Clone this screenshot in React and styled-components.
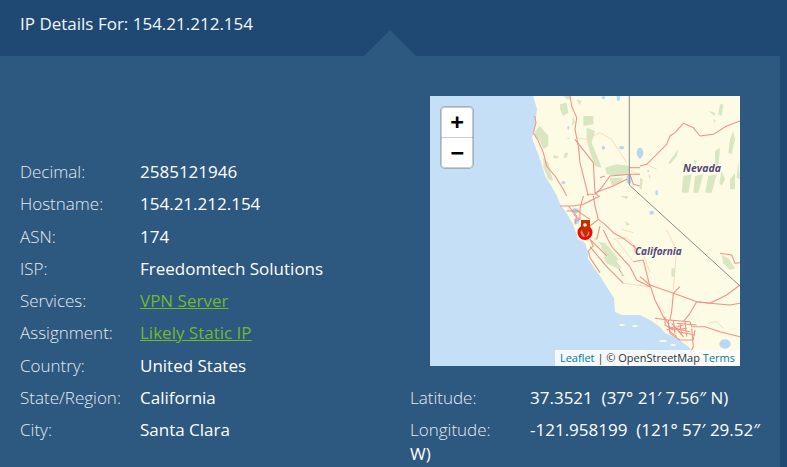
import React from "react";
import styled, { createGlobalStyle } from "styled-components";

const Global = createGlobalStyle`
  html, body { margin: 0; padding: 0; background: #1f4973; overflow: hidden; height: 467px; }
  * { box-sizing: border-box; }
`;

const Page = styled.div`
  width: 787px;
  height: 467px;
  overflow: hidden;
  font-family: "Open Sans", "Liberation Sans", sans-serif;
  font-size: 17px;
  color: #fff;
  background: #1f4973;
`;

const Header = styled.header`
  position: relative;
  height: 56px;
  padding: 12px 20px 0;
  line-height: 24px;
  color: #f2f6fa;
`;

const Notch = styled.span`
  position: absolute;
  left: 364px;
  bottom: 0;
  width: 0;
  height: 0;
  border-left: 26px solid transparent;
  border-right: 26px solid transparent;
  border-bottom: 26px solid #2d587f;
`;

const Panel = styled.section`
  width: 780px;
  height: 411px;
  background: #2d587f;
  display: flex;
  padding-top: 40px;
`;

const LeftColumn = styled.div`
  width: 410px;
  padding: 64px 0 0 20px;
`;

const RightColumn = styled.div`
  width: 356px;
`;

const Row = styled.div`
  line-height: 24px;
  margin-bottom: 8.25px;
`;

const Label = styled.span`
  display: inline-block;
  width: 120px;
  font-weight: 300;
  color: #e3ebf2;
`;

const Value = styled.span`
  color: #fff;
`;

const ValueLink = styled.a`
  color: #74b72f;
  text-decoration: underline;
`;

const MapBox = styled.div`
  position: relative;
  width: 310px;
  height: 270px;
  margin: 0 0 20px 20px;
  background: #c4dff6;
  overflow: hidden;
`;

const MapArt = styled.svg`
  display: block;
  width: 310px;
  height: 270px;
`;

const SoftLayer = styled.g`
  filter: blur(0.45px);
`;

const MapLabel = styled.text`
  font-family: "Open Sans", "Liberation Sans", sans-serif;
  font-size: ${(p) => p.$size}px;
  font-weight: 700;
  font-style: italic;
  fill: #54466f;
  stroke: rgba(255, 255, 255, 0.6);
  stroke-width: 1.5px;
  paint-order: stroke;
`;

const ZoomControl = styled.div`
  position: absolute;
  left: 11px;
  top: 11px;
  width: 32px;
  border-radius: 4px;
  outline: 2px solid rgba(0, 0, 0, 0.2);
  outline-offset: -1px;
  background: #fff;
  overflow: hidden;
  display: flex;
  flex-direction: column;
`;

const ZoomButton = styled.button`
  width: 32px;
  height: 30px;
  border: 0;
  padding: 0;
  background: #fff;
  color: #000;
  font: 700 22px/28px "DejaVu Sans Mono", monospace;
  & + & { border-top: 1px solid #ccc; height: 31px; }
`;

const Attribution = styled.div`
  position: absolute;
  right: 0;
  bottom: 0;
  height: 16px;
  padding: 0 5px;
  background: rgba(255, 255, 255, 0.8);
  color: #333;
  font-size: 11px;
  line-height: 16px;
  white-space: nowrap;
`;

const AttributionLink = styled.a`
  color: #0078a8;
`;

const land =
  "M533 96 L537 109 L535 126 L532 138 L535 146 L540 159 L545 176 L550 184 L557 196 L560 204 L567 214 L573 224 L578 239 L585 243 L588 253 L588 259 L600 276 L610 292 L614 298 L615 312 L622 315 L640 315 L650 320 L660 327 L665 333 L677 338 L690 348 L697 366 L740 366 L740 96 Z";

/* Each tile holds strokes in units of a third of a pixel, placed at its own corner. */
const tiles = [
  {
    x: 530,
    y: 96,
    parks: [
      "15,105 30,90 55,120 55,150 40,160 30,135 15,120",
      "40,185 55,200 65,240 70,255 55,250 40,215",
      "90,25 110,20 115,50 100,60 90,40",
      "160,60 190,60 190,85 160,90",
      "170,95 195,105 185,140 205,190 215,215 195,210 180,170 170,130",
      "225,215 260,205 300,210 295,235 265,240 230,235",
      "240,245 280,245 270,260 245,270",
      "70,178 85,180 85,187 70,187",
      "105,170 115,170 110,185 100,185",
      "130,60 135,80 125,90",
      "110,125 120,125 115,130",
      "100,0 125,0 115,12",
      "140,10 155,15 148,28",
    ],
    minor: [
      "140,125 170,130 210,110 245,130 290,200",
      "40,190 60,230",
      "300,225 330,235",
    ],
    roads: [
      "120,0 125,30 140,65 135,100 145,150 150,200 165,260 175,300",
      "10,110 25,135 40,170 50,210 75,240 100,280 110,300",
      "135,130 190,200 195,290 205,300",
      "330,235 300,235 240,240 215,275 195,295 170,295",
      "300,215 330,215",
      "195,290 250,270 290,250",
      "225,240 210,245",
      "300,235 310,265 330,270",
      "14,60 18,80 10,110",
    ],
    lakes: [
      [100, 260, 6, 5], [220, 155, 5, 6], [275, 155, 8, 5], [265, 5, 5, 10], [220, 5, 5, 4],
      [330, 170, 10, 15], [297, 250, 8, 14], [115, 95, 3, 6],
    ],
  },
  {
    x: 640,
    y: 96,
    parks: [
      "240,25 250,25 245,60 235,55",
      "205,45 225,50 225,60",
      "220,70 228,75 222,80",
      "270,130 280,105 285,130 275,175 265,170",
      "85,200 115,160 110,180 90,205",
      "225,165 240,155 235,210 225,205",
      "160,190 170,195 165,210",
      "130,240 155,235 145,290 125,290",
      "165,240 190,235 175,290 160,290",
      "205,240 230,235 215,290 195,290",
      "245,225 255,250 245,270 238,260",
      "270,250 285,230 285,280 270,280",
      "295,195 300,250 290,245",
      "0,245 8,250 5,280 0,280",
      "25,235 32,240 28,250",
    ],
    minor: ["20,205 50,220"],
    roads: [
      "0,210 20,205 50,175 80,145 90,120 105,110 130,82 160,95 180,120 220,115 260,90 300,75",
    ],
    lakes: [[0, 175, 5, 14], [50, 290, 4, 8], [25, 225, 3, 3]],
  },
  {
    x: 560,
    y: 196,
    parks: [
      "125,140 145,150 175,190 165,200 145,185 125,160",
      "100,125 115,125 105,135",
      "195,75 210,85 200,90",
      "180,0 205,0 200,10",
      "95,215 105,220 100,228",
      "150,180 170,185 160,195",
    ],
    minor: [
      "160,130 200,125 225,150",
      "250,175 270,230",
      "185,100 220,110",
    ],
    roads: [
      "0,30 40,30 70,25 100,10 120,0",
      "100,0 105,30 115,70 135,85 160,110 195,130 225,155 225,170",
      "115,70 90,90 85,105",
      "60,40 60,70 50,75",
      "45,40 90,70",
      "70,0 60,40",
      "90,130 125,165 150,190 175,215 190,240",
      "90,130 100,150 85,165 90,185 120,230",
      "40,55 60,70",
      "120,90 110,130",
      "25,30 50,60 45,85",
      "20,45 60,45",
    ],
    lakes: [[45, 45, 11, 8], [50, 75, 8, 9], [275, 50, 7, 6]],
  },
  {
    x: 430,
    y: 230,
    parks: [
      "520,80 545,75 575,115 560,115 530,100",
      "570,125 580,130 575,140",
      "725,115 735,115 733,140 725,140",
      "505,35 530,40 520,55",
    ],
    minor: [
      "710,0 740,60 730,180",
      "580,160 660,170",
      "610,95 560,30",
    ],
    roads: [
      "520,0 545,50 600,110 620,150 660,170",
      "610,45 620,60",
      "610,95 640,90 660,170",
      "480,50 530,110 570,150 580,160",
    ],
    lakes: [],
  },
  {
    x: 640,
    y: 270,
    parks: [
      "95,0 105,0 103,18 95,18",
      "245,-45 265,-35 285,-5 270,0 250,-20",
    ],
    minor: [
      "205,160 230,155 250,175",
      "50,100 75,130",
      "170,255 180,285",
    ],
    roads: [
      "0,20 30,45 45,90 70,140 85,160 90,185 110,200",
      "30,45 100,70 130,80 170,95 210,100 260,75 300,45",
      "100,70 95,125 90,150",
      "170,95 150,130 130,155",
      "170,95 210,100 270,105 300,100",
      "120,50 100,70",
      "45,145 85,150 150,155 155,170 195,170 240,185 300,200",
      "85,150 90,190 120,210 160,210 165,180",
      "120,160 125,195",
      "155,175 160,230 150,250",
      "110,160 170,165",
      "75,140 75,165 100,180 140,175",
      "100,150 105,190",
      "135,155 140,200",
      "85,170 150,185",
      "240,-50 275,-45 285,-20 300,-22",
      "150,250 175,260 170,288",
      "95,160 130,200 110,175",
      "80,180 130,165",
      "115,185 165,195",
    ],
    lakes: [[255, 222, 17, 14]],
  },
];

const islands = [
  [663, 341, 4, 1], [673, 345, 3, 1], [642, 352, 3, 1], [622, 325, 3, 1], [635, 326, 3, 1],
];

const Park = styled.polygon`
  fill: #d8e6c2;
`;

const Trace = styled.polyline`
  fill: none;
  stroke: ${(p) => (p.$minor ? "#f8d6ba" : "#f09289")};
  stroke-width: ${(p) => (p.$minor ? 2.6 : 3.2)};
  stroke-linejoin: round;
`;

const Water = styled.ellipse`
  fill: #b9d6f2;
`;

function CaliforniaMap() {
  return (
    <MapArt viewBox="430 96 310 270" aria-hidden="true">
      <SoftLayer>
        <path d={land} fill="#fdfbe4" />
        {islands.map(([x, y, rx, ry]) => (
          <ellipse key={`${x}-${y}`} cx={x} cy={y} rx={rx} ry={ry} fill="#fdfbe4" />
        ))}
        {tiles.map((t) => (
          <g key={`${t.x}-${t.y}`} transform={`translate(${t.x} ${t.y}) scale(.3333)`}>
            {t.parks.map((p) => <Park key={p} points={p} />)}
            {t.lakes.map(([x, y, rx, ry]) => <Water key={`${x}-${y}`} cx={x} cy={y} rx={rx} ry={ry} />)}
            {t.minor.map((p) => <Trace key={p} points={p} $minor />)}
            {t.roads.map((p) => <Trace key={p} points={p} />)}
          </g>
        ))}
      </SoftLayer>
      <path d="M629.300 96 V185 L740 286" fill="none" stroke="#8c8a8c" strokeWidth="1" />
      <MapLabel x="683" y="172" $size={10.5}>Nevada</MapLabel>
      <MapLabel x="635" y="255" $size={10}>California</MapLabel>
      <circle cx="585" cy="232.500" r="6" fill="#dc8b7c" stroke="#ff0000" strokeWidth="3" />
      <path d="M581 220 H590 V229 L585.500 238 L581 229 Z" fill="#bd3300" />
      <circle cx="585" cy="225" r="1.800" fill="#f7e9df" />
    </MapArt>
  );
}

const rows = [
  ["Decimal:", "2585121946"],
  ["Hostname:", "154.21.212.154"],
  ["ASN:", "174"],
  ["ISP:", "Freedomtech Solutions"],
  ["Services:", "VPN Server", true],
  ["Assignment:", "Likely Static IP", true],
  ["Country:", "United States"],
  ["State/Region:", "California"],
  ["City:", "Santa Clara"],
];

export default function App() {
  return (
    <Page>
      <Global />
      <Header>
        IP Details For: 154.21.212.154
        <Notch />
      </Header>
      <Panel>
        <LeftColumn>
          {rows.map(([label, value, link]) => (
            <Row key={label}>
              <Label>{label}</Label>
              {link ? <ValueLink href="#">{value}</ValueLink> : <Value>{value}</Value>}
            </Row>
          ))}
        </LeftColumn>
        <RightColumn>
          <MapBox>
            <CaliforniaMap />
            <ZoomControl>
              <ZoomButton>+</ZoomButton>
              <ZoomButton>−</ZoomButton>
            </ZoomControl>
            <Attribution>
              <AttributionLink>Leaflet</AttributionLink> | © OpenStreetMap <AttributionLink>Terms</AttributionLink>
            </Attribution>
          </MapBox>
          <Row>
            <Label>Latitude:</Label>
            <Value>37.3521 &nbsp;(37° 21′ 7.56″ N)</Value>
          </Row>
          <Row>
            <Label>Longitude:</Label>
            <Value>-121.958199 &nbsp;(121° 57′ 29.52″ W)</Value>
          </Row>
        </RightColumn>
      </Panel>
    </Page>
  );
}
